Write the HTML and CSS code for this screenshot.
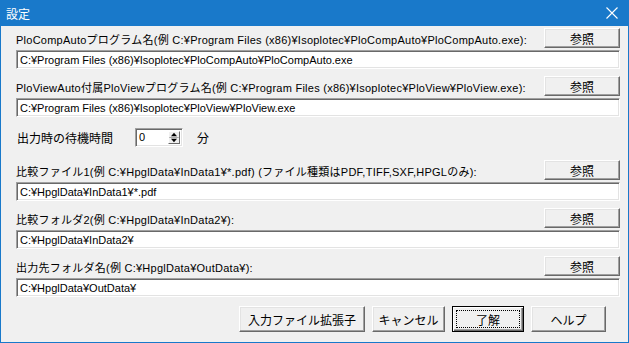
FILE: index.html
```html
<!DOCTYPE html>
<html lang="ja">
<head>
<meta charset="utf-8">
<link rel="stylesheet" href="styles.css">
</head>
<body>
<div class="window">
  <div class="titlebar">
    <span class="title">設定</span>
    <svg class="close" width="12" height="12" viewBox="0 0 12 12"><path d="M0.5 0.5 L11.5 11.5 M11.5 0.5 L0.5 11.5" stroke="#fff" stroke-width="1.1" fill="none"/></svg>
  </div>
  <div class="content">
    <div class="group">
      <div class="labelrow"><span class="label">PloCompAutoプログラム名(例 C:¥Program Files (x86)¥Isoplotec¥PloCompAuto¥PloCompAuto.exe):</span><button class="btn ref">参照</button></div>
      <div class="field">C:¥Program Files (x86)¥Isoplotec¥PloCompAuto¥PloCompAuto.exe</div>
    </div>
    <div class="group">
      <div class="labelrow"><span class="label">PloViewAuto付属PloViewプログラム名(例 C:¥Program Files (x86)¥Isoplotec¥PloView¥PloView.exe):</span><button class="btn ref">参照</button></div>
      <div class="field">C:¥Program Files (x86)¥Isoplotec¥PloView¥PloView.exe</div>
    </div>
    <div class="waitrow">
      <span class="waitlabel">出力時の待機時間</span>
      <div class="spin">
        <span class="spinval">0</span>
        <span class="spinbtns">
          <svg width="11" height="15" viewBox="0 0 11 15"><path d="M5.5 2 L9 6 L2 6 Z" fill="#000"/><path d="M2 9 L9 9 L5.5 13 Z" fill="#000"/><line x1="0" y1="7.5" x2="11" y2="7.5" stroke="#a0a0a0" stroke-width="1"/></svg>
        </span>
      </div>
      <span class="unit">分</span>
    </div>
    <div class="group">
      <div class="labelrow"><span class="label">比較ファイル1(例 C:¥HpglData¥InData1¥*.pdf) (ファイル種類はPDF,TIFF,SXF,HPGLのみ):</span><button class="btn ref">参照</button></div>
      <div class="field">C:¥HpglData¥InData1¥*.pdf</div>
    </div>
    <div class="group">
      <div class="labelrow"><span class="label">比較フォルダ2(例 C:¥HpglData¥InData2¥):</span><button class="btn ref">参照</button></div>
      <div class="field">C:¥HpglData¥InData2¥</div>
    </div>
    <div class="group">
      <div class="labelrow"><span class="label">出力先フォルダ名(例 C:¥HpglData¥OutData¥):</span><button class="btn ref">参照</button></div>
      <div class="field">C:¥HpglData¥OutData¥</div>
    </div>
    <div class="footer">
      <button class="btn fbtn ext">入力ファイル拡張子</button>
      <button class="btn fbtn cancel">キャンセル</button>
      <button class="btn fbtn ok"><span class="focus">了解</span></button>
      <button class="btn fbtn help">ヘルプ</button>
    </div>
  </div>
</div>
</body>
</html>
```
FILE: styles.css
```css
* { box-sizing: border-box; }
html, body { margin: 0; padding: 0; }
body {
  width: 629px;
  height: 343px;
  overflow: hidden;
  font-family: "Liberation Sans", "Noto Sans CJK JP", sans-serif;
  font-size: 11px;
  color: #000;
  background: #f0f0f0;
}
.window {
  width: 629px;
  height: 343px;
  border: 1px solid #1979ca;
  border-top: none;
  background: #f0f0f0;
  display: flex;
  flex-direction: column;
}
.titlebar {
  height: 26px;
  background: #1979ca;
  display: flex;
  align-items: center;
  justify-content: space-between;
  padding: 0 10px 0 5px;
  flex: none;
}
.title {
  color: #fff;
  font-family: "Noto Sans CJK JP", sans-serif;
  font-size: 12px;
}
.close { display: block; }
.content {
  padding: 2px 8px 0 15px;
  display: flex;
  flex-direction: column;
}
.group {
  display: flex;
  flex-direction: column;
  gap: 2px;
  margin-bottom: 7px;
}
.labelrow {
  display: flex;
  justify-content: space-between;
  align-items: center;
  height: 20px;
}
.label { white-space: nowrap; padding-top: 1px; letter-spacing: 0.25px; }
.btn {
  font-family: "Noto Sans CJK JP", sans-serif;
  font-size: 12px;
  color: #000;
  background: #f0f0f0;
  border: 1px solid;
  border-color: #fff #696969 #696969 #fff;
  box-shadow: inset -1px -1px 0 #a0a0a0, inset 1px 1px 0 #e3e3e3;
  padding: 0;
  margin: 0;
  display: flex;
  align-items: center;
  justify-content: center;
}
.ref { width: 76px; height: 20px; }
.field {
  height: 19px;
  background: #fff;
  border: 1px solid;
  border-color: #a0a0a0 #fff #fff #a0a0a0;
  box-shadow: inset 1px 1px 0 #696969, inset -1px -1px 0 #e3e3e3;
  padding: 0 0 0 3px;
  display: flex;
  align-items: center;
  white-space: nowrap;
}
.waitrow {
  display: flex;
  align-items: center;
  height: 19px;
  margin: 4px 0 13px 0;
}
.waitlabel {
  width: 119px;
  font-family: "Noto Sans CJK JP", sans-serif;
  font-size: 12px;
  padding-left: 1px;
}
.spin {
  width: 48px;
  height: 19px;
  background: #fff;
  border: 1px solid;
  border-color: #a0a0a0 #fff #fff #a0a0a0;
  box-shadow: inset 1px 1px 0 #696969, inset -1px -1px 0 #e3e3e3;
  display: flex;
  align-items: stretch;
  padding: 2px 2px 2px 3px;
}
.spinval { flex: 1; line-height: 13px; }
.spinbtns {
  width: 12px;
  background: #f0f0f0;
  border: 1px solid;
  border-color: #fff #696969 #696969 #fff;
  display: flex;
  align-items: center;
  justify-content: center;
}
.spinbtns svg { display: block; width: 10px; height: 13px; }
.unit {
  margin-left: 14px;
  font-family: "Noto Sans CJK JP", sans-serif;
  font-size: 12px;
}
.footer {
  display: flex;
  justify-content: flex-end;
  gap: 7px;
  margin-top: 2px;
  padding-right: 14px;
}
.fbtn { height: 26px; }
.ext { width: 126px; }
.cancel { width: 73px; }
.ok {
  width: 72px;
  border: 1px solid #000;
  box-shadow: inset 1px 1px 0 #fff, inset -1px -1px 0 #696969, inset -2px -2px 0 #a0a0a0;
  padding: 3px;
}
.focus {
  width: 100%;
  height: 100%;
  border: 1px dotted #000;
  display: flex;
  align-items: center;
  justify-content: center;
}
.help { width: 75px; }
```
